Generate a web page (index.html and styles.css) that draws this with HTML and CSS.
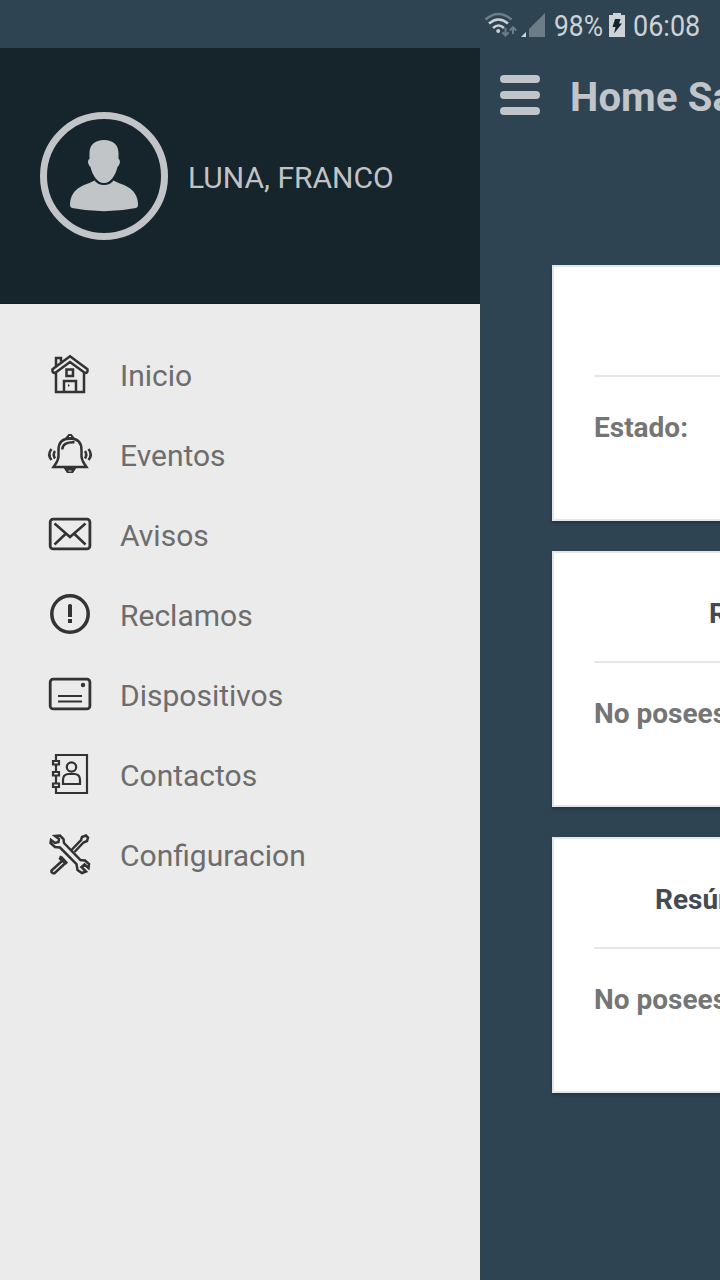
FILE: index.html
```html
<!DOCTYPE html>
<html lang="es">
<head>
<meta charset="utf-8">
<title>Home</title>
<link rel="stylesheet" href="styles.css">
</head>
<body>
<div class="screen">
  <header class="status">
    <svg class="signals" width="64" height="26" viewBox="484 12 64 26">
      <g fill="none" stroke-width="2.6">
        <path stroke="#6d7d87" d="M485.500 19.500Q498.500 8.500 511.500 19.500"/>
        <path stroke="#c9cfd3" d="M489 23.500Q498.500 15.500 508 23.500M493 28Q498.500 23 504 28"/>
        <path stroke="#6d7d87" stroke-width="2" d="M505.500 28V35M502.300 32.200L505.500 35.500L508.700 32.200M513 34V27.500M509.800 30.500L513 27.200L516.200 30.500"/>
      </g>
      <circle cx="498.200" cy="31" r="2" fill="#c9cfd3"/>
      <path fill="#d0d5d9" d="M521 37L526 32V37Z"/>
      <path fill="#6d7d87" d="M529 37V29L545 13V37Z"/>
    </svg>
    <span class="percent"><span class="narrow">98%</span></span>
    <svg class="battery" width="16" height="24" viewBox="0 0 16 24">
      <path fill="#ced3d7" d="M0 2H4V0H12V2H16V24H0Z"/>
      <path fill="#17232b" d="M6 6H11.500L10 10.500H13L5 20.500L6.500 14H3.500Z"/>
    </svg>
    <span class="clock"><span class="narrow narrow-clock">06:08</span></span>
  </header>
  <div class="main">
    <aside class="drawer">
      <div class="profile">
        <svg class="avatar" width="128" height="128" viewBox="0 0 128 128">
          <circle cx="64" cy="64" r="60.500" fill="none" stroke="#c1c5c8" stroke-width="7"/>
          <path fill="#c1c5c8" d="M64 28C73 28 78.500 33 78.500 41V47C81 48 80 53 77.500 55C75.500 63 71 71 64 71C57 71 52.500 63 50.500 55C48 53 47 48 49.500 47V41C49.500 33 55 28 64 28Z"/>
          <path fill="#c1c5c8" d="M54.500 68.500Q58 73 64 73Q70 73 73.500 68.500Q78 71 84 73Q98 79 98 93Q98 95.500 96 96Q64 102.500 32 96Q30 95.500 30 93Q30 79 44 73Q50 71 54.500 68.500Z"/>
        </svg>
        <span class="name">LUNA, FRANCO</span>
      </div>
      <nav class="menu">
        <a class="item">
          <svg class="icon" viewBox="0 0 60 60">
            <path d="M16 21.500V13H21V16.500M30 11.300L47.500 24.200Q48.200 28 45 28L30 17L15 28Q11.800 28 12.500 24.200ZM16 28V47H44V28M26.500 24.500H33V31H26.500ZM24 47V36H36V47"/>
            <path class="solid" d="M28 39L30 40.500L28 42Z"/>
          </svg>
          <span>Inicio</span>
        </a>
        <a class="item">
          <svg class="icon" viewBox="0 0 60 60">
            <path d="M18.500 31V25C18.500 17.500 22.500 13.500 30 13.500S41.500 17.500 41.500 25V31C41.500 36 44 38 46.500 42H13.500C16 38 18.500 36 18.500 31ZM22.300 24.500Q22.500 16.800 34.500 17.300M11.500 24Q7 29.500 11.500 35M15 26Q12.500 29.500 15 33.500M48.500 24Q53 29.500 48.500 35M45 26Q47.500 29.500 45 33.500"/>
            <path class="solid" d="M26 12L28.500 9H31.500L34 12L36 15H24ZM23 42H37L33 48H27Z"/>
            <path class="hole" d="M29 11.500H31M28.500 46H31.500"/>
          </svg>
          <span>Eventos</span>
        </a>
        <a class="item">
          <svg class="icon" viewBox="0 0 60 60">
            <rect x="10.200" y="14.200" width="39.700" height="29.700" rx="3" stroke-width="2.800"/>
            <path d="M14.500 18.500L30 32L45.500 18.500M14.500 39.500L25.500 29M45.500 39.500L34.500 29"/>
          </svg>
          <span>Avisos</span>
        </a>
        <a class="item">
          <svg class="icon" viewBox="0 0 60 60">
            <circle cx="30" cy="29" r="18.200" stroke-width="3.500"/>
            <path class="solid" d="M28 20Q30 18 32 20V32H28ZM28 34H32V38H28Z"/>
          </svg>
          <span>Reclamos</span>
        </a>
        <a class="item">
          <svg class="icon" viewBox="0 0 60 60">
            <rect x="10.200" y="14.200" width="39.700" height="29.700" rx="3" stroke-width="2.800"/>
            <path stroke-width="2" d="M18 31H42M18 36.500H42"/>
            <circle class="solid" cx="43" cy="20" r="2.200"/>
          </svg>
          <span>Dispositivos</span>
        </a>
        <a class="item">
          <svg class="icon icon-book" viewBox="0 0 60 60">
            <path d="M16 15V10H47V48H16V43M16 20V26M16 31V38M13 16H19V19.500H13ZM13 27H19V30.500H13ZM13 38.500H19V42H13ZM23 39V35Q23 29.500 28 29H35Q40 29.500 40 35V39Z"/>
            <circle cx="31.500" cy="22" r="4.700"/>
          </svg>
          <span>Contactos</span>
        </a>
        <a class="item">
          <svg class="icon" viewBox="0 0 60 60">
            <path d="M31.500 25L41 15L42 12L46 10.500L48 12.500L47 16L43.500 17.500L34.500 27"/>
            <path d="M22 36L11.500 45.500V47L13 48.200H14.500L26 37.500"/>
            <path class="solid" d="M20 30.500L22.500 31.500L28 37.500L26.500 39.500L22.500 37.500L18.500 34Z"/>
            <path fill="#ebebeb" d="M15 11L20 10.500L23.500 14L24 18L40.500 35L45 35.500L49 39L48.500 43L44.500 39.500L41.500 42L46 46.500L42 48L37.500 45L36.500 39L20 22.500L15 22L10.500 18L11 15L15 18L18.500 17L19 14Z"/>
          </svg>
          <span>Configuracion</span>
        </a>
      </nav>
    </aside>
    <section class="page">
      <div class="toolbar">
        <div class="burger"><i></i><i></i><i></i></div>
        <h1 class="title">Home Sa</h1>
      </div>
      <div class="cards">
        <article class="card">
          <h2 class="heading"></h2>
          <p class="body">Estado:</p>
        </article>
        <article class="card">
          <h2 class="heading heading-short">R</h2>
          <p class="body">No posees</p>
        </article>
        <article class="card">
          <h2 class="heading heading-long">Resúm</h2>
          <p class="body">No posees</p>
        </article>
      </div>
    </section>
  </div>
</div>
</body>
</html>
```
FILE: styles.css
```css
* { box-sizing: border-box; }
body { margin: 0; font-family: Roboto, sans-serif; }
.screen { width: 720px; height: 1280px; overflow: hidden; display: flex; flex-direction: column; background: #2f4453; }
.status { height: 48px; padding: 1px 20px 0 484px; display: flex; align-items: center; color: #cdd2d5; font-size: 30px; line-height: 48px; white-space: nowrap; }
.signals { flex: none; }
.percent { width: 48px; margin-left: 6px; padding-top: 2px; }
.battery { flex: none; margin: 0 8px 0 7px; }
.clock { width: 67px; padding-top: 2px; }
.narrow { display: inline-block; transform: scaleX(.88); transform-origin: left; }
.narrow-clock { transform: scaleX(.9); }
.main { flex: 1; display: flex; min-height: 0; }
.drawer { width: 480px; flex: none; background: #ebebeb; }
.profile { height: 256px; padding: 64px 40px 0; display: flex; align-items: flex-start; gap: 20px; background: #16242c; border-bottom: 1px solid #132028; }
.name { line-height: 128px; padding-top: 2px; font-size: 30px; color: #c1c3c5; white-space: nowrap; }
.menu { padding-top: 31px; }
.item { height: 80px; padding-left: 40px; display: flex; align-items: center; gap: 20px; color: #6d6d6d; font-size: 30px; line-height: 80px; }
.item span { padding-top: 2px; }
.icon { width: 60px; height: 60px; flex: none; margin-top: -1px; fill: none; stroke: #343334; stroke-width: 2.5; }
.icon-book { stroke-width: 2.2; }
.solid { fill: #343334; stroke: none; }
.hole { stroke: #ebebeb; stroke-width: 1; }
.page { flex: 1; min-width: 0; overflow: hidden; }
.toolbar { height: 96px; padding-left: 20px; display: flex; align-items: center; gap: 30px; }
.burger { width: 40px; flex: none; display: flex; flex-direction: column; gap: 8px; margin-top: -2px; }
.burger i { height: 8px; border-radius: 4px; background: #c1c5c9; }
.title { margin: 4px 0 0; font-size: 40px; line-height: 48px; font-weight: 700; color: #c1c5c9; white-space: nowrap; letter-spacing: .15px; }
.cards { padding: 121px 0 0 72px; display: flex; flex-direction: column; gap: 30px; }
.card { width: 500px; height: 256px; padding: 0 40px; border: 2px solid #e1e7eb; background: #fff; box-shadow: 0 2px 3px rgba(0,0,0,.25); }
.heading { height: 110px; margin: 0; padding-top: 40px; border-bottom: 2px solid #e1e7eb; font-size: 28px; line-height: 42px; color: #444b50; white-space: nowrap; }
.heading-short { padding-left: 115px; }
.heading-long { padding-left: 61px; }
.body { margin: 30px 0 0; font-size: 28px; line-height: 42px; font-weight: 700; color: #757575; white-space: nowrap; }
```
